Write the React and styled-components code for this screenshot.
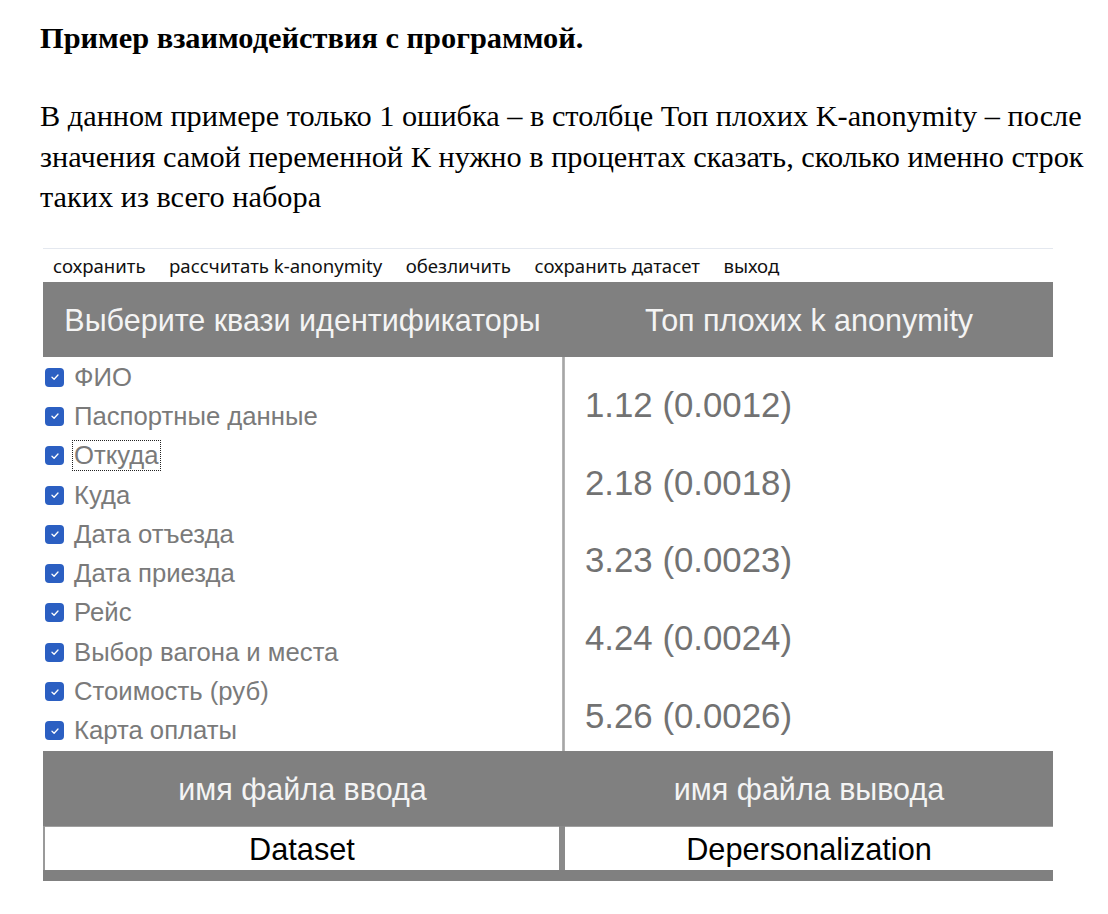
import React from "react";
import styled, { createGlobalStyle } from "styled-components";

const Global = createGlobalStyle`
  html, body { margin: 0; padding: 0; background: #ffffff; }
  body { font-family: "Liberation Serif", "Times New Roman", serif; }
`;

const Page = styled.div`
  width: 1108px;
  padding: 18px 0 0 40px;
  box-sizing: border-box;
`;

const Title = styled.h1`
  margin: 0;
  font-family: "Liberation Serif", serif;
  font-weight: 700;
  font-size: 30.4px;
  line-height: 40px;
  color: #000;
  white-space: nowrap;
`;

const Para = styled.p`
  margin: 38px 0 0 0;
  font-family: "Liberation Serif", serif;
  font-size: 30.3px;
  line-height: 40.5px;
  color: #000;
  width: 1062px;
`;

const Panel = styled.div`
  margin: 30px 0 0 3px;
  width: 1010px;
  border-top: 1px solid #e4e8ef;
  display: flex;
  flex-direction: column;
`;

const Menu = styled.div`
  height: 33px;
  display: flex;
  align-items: center;
  padding-left: 10px;
  gap: 23.5px;
  background: #fff;
  font-family: "Noto Sans", "Open Sans", sans-serif;
  font-size: 18.6px;
  color: #111;
`;

const MenuItem = styled.span`
  white-space: nowrap;
`;

const Row = styled.div`
  display: grid;
  grid-template-columns: 519px 3px 488px;
  height: ${(p) => p.$h}px;
  overflow: hidden;
`;

const HeadCell = styled.div`
  background: #808080;
  color: #f4f4f4;
  font-family: "Liberation Sans", Arial, sans-serif;
  font-size: 30.5px;
  display: flex;
  align-items: center;
  justify-content: center;
  padding-top: 3px;
`;

const HeadSep = styled.div`
  background: #808080;
`;

const Divider = styled.div`
  background: linear-gradient(to right, #c4c4c4 0, #a6a6a6 1px, #a6a6a6 2px, #c4c4c4 3px);
`;

const CheckList = styled.div`
  padding: 1px 0 0 2px;
  display: flex;
  flex-direction: column;
`;

const CheckItem = styled.div`
  height: 39.3px;
  flex: none;
  display: flex;
  align-items: center;
  gap: 11px;
  font-family: "Liberation Sans", Arial, sans-serif;
  font-size: 25.7px;
  color: #7a7a7a;
`;

const Box = styled.span`
  width: 19px;
  height: 19px;
  border-radius: 4px;
  background: #2b5fc2;
  display: inline-flex;
  align-items: center;
  justify-content: center;
  flex: none;
`;

const Label = styled.span`
  line-height: 29px;
  padding: 0 1px;
  margin-left: -2px;
  outline: ${(p) => (p.$focus ? "1px dotted #222" : "none")};
`;

const Values = styled.div`
  padding: 10px 0 0 20px;
  display: flex;
  flex-direction: column;
`;

const Value = styled.div`
  height: 77.6px;
  flex: none;
  display: flex;
  align-items: center;
  font-family: "Liberation Sans", Arial, sans-serif;
  font-size: 34.8px;
  color: #727272;
`;

const InputRow = styled.div`
  display: grid;
  grid-template-columns: 2px 514px 6px 488px;
  background: #808080;
  padding-bottom: 11px;
`;

const Gap = styled.div`
  background: ${(p) => p.$bg || "#909090"};
`;

const Field = styled.div`
  height: 44px;
  background: #fff;
  border-top: 1px solid #a0a0a0;
  box-sizing: border-box;
  display: flex;
  align-items: center;
  justify-content: center;
  padding-top: 3px;
  font-family: "Liberation Sans", Arial, sans-serif;
  font-size: 30.7px;
  color: #000;
`;

const Check = () => (
  <svg width="12" height="12" viewBox="0 0 12 12">
    <path d="M3 6.3 L5.1 8.2 L9 4" fill="none" stroke="#fff" strokeWidth="1.3" strokeLinecap="round" strokeLinejoin="round" />
  </svg>
);

const items = [
  "ФИО",
  "Паспортные данные",
  "Откуда",
  "Куда",
  "Дата отъезда",
  "Дата приезда",
  "Рейс",
  "Выбор вагона и места",
  "Стоимость (руб)",
  "Карта оплаты",
];

const values = ["1.12 (0.0012)", "2.18 (0.0018)", "3.23 (0.0023)", "4.24 (0.0024)", "5.26 (0.0026)"];

export default function App() {
  return (
    <Page>
      <Global />
      <Title>Пример взаимодействия с программой.</Title>
      <Para>
        В данном примере только 1 ошибка – в столбце Топ плохих K-anonymity – после значения самой переменной К нужно в процентах сказать, сколько именно строк таких из всего набора
      </Para>
      <Panel>
        <Menu>
          <MenuItem>сохранить</MenuItem>
          <MenuItem>рассчитать k-anonymity</MenuItem>
          <MenuItem>обезличить</MenuItem>
          <MenuItem>сохранить датасет</MenuItem>
          <MenuItem>выход</MenuItem>
        </Menu>
        <Row $h={75}>
          <HeadCell>Выберите квази идентификаторы</HeadCell>
          <HeadSep />
          <HeadCell>Топ плохих k anonymity</HeadCell>
        </Row>
        <Row $h={394}>
          <CheckList>
            {items.map((t, i) => (
              <CheckItem key={t}>
                <Box>
                  <Check />
                </Box>
                <Label $focus={i === 2}>{t}</Label>
              </CheckItem>
            ))}
          </CheckList>
          <Divider />
          <Values>
            {values.map((v) => (
              <Value key={v}>{v}</Value>
            ))}
          </Values>
        </Row>
        <Row $h={75}>
          <HeadCell>имя файла ввода</HeadCell>
          <HeadSep />
          <HeadCell>имя файла вывода</HeadCell>
        </Row>
        <InputRow>
          <Gap $bg="#9a9a9a" />
          <Field>Dataset</Field>
          <Gap $bg="#8a8a8a" />
          <Field>Depersonalization</Field>
        </InputRow>
      </Panel>
    </Page>
  );
}
